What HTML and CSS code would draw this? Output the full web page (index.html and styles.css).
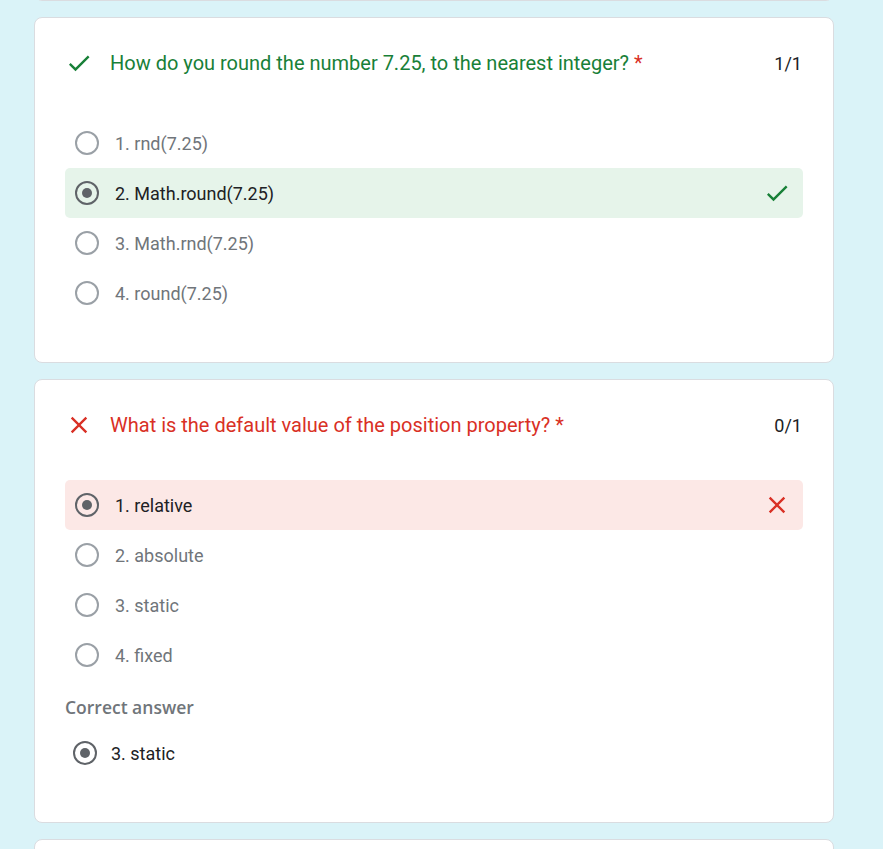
FILE: index.html
```html
<!DOCTYPE html>
<html lang="en">
<head>
<meta charset="utf-8">
<title>Quiz results</title>
<link rel="stylesheet" href="styles.css">
</head>
<body>
<main class="page">
  <section class="card card-prev"></section>

  <section class="card">
    <header class="q-head">
      <span class="q-icon">
        <svg width="28" height="28" viewBox="0 0 24 24"><path fill="#188038" d="M9 16.17L4.83 12l-1.42 1.41L9 19 21 7l-1.41-1.41z"/></svg>
      </span>
      <h2 class="q-title q-title-ok">How do you round the number 7.25, to the nearest integer? <span class="req">*</span></h2>
      <span class="q-score">1/1</span>
    </header>
    <ul class="opts">
      <li class="opt"><span class="radio"></span><span class="opt-text">1. rnd(7.25)</span></li>
      <li class="opt opt-ok"><span class="radio radio-on"></span><span class="opt-text">2. Math.round(7.25)</span>
        <svg class="opt-mark" width="28" height="28" viewBox="0 0 24 24"><path fill="#188038" d="M9 16.17L4.83 12l-1.42 1.41L9 19 21 7l-1.41-1.41z"/></svg>
      </li>
      <li class="opt"><span class="radio"></span><span class="opt-text">3. Math.rnd(7.25)</span></li>
      <li class="opt"><span class="radio"></span><span class="opt-text">4. round(7.25)</span></li>
    </ul>
  </section>

  <section class="card">
    <header class="q-head">
      <span class="q-icon">
        <svg width="28" height="28" viewBox="0 0 24 24"><path fill="#d93025" d="M19 6.41L17.59 5 12 10.59 6.41 5 5 6.41 10.59 12 5 17.59 6.41 19 12 13.41 17.59 19 19 17.59 13.41 12z"/></svg>
      </span>
      <h2 class="q-title q-title-bad">What is the default value of the position property? <span class="req">*</span></h2>
      <span class="q-score">0/1</span>
    </header>
    <ul class="opts">
      <li class="opt opt-bad"><span class="radio radio-on"></span><span class="opt-text">1. relative</span>
        <svg class="opt-mark" width="28" height="28" viewBox="0 0 24 24"><path fill="#d93025" d="M19 6.41L17.59 5 12 10.59 6.41 5 5 6.41 10.59 12 5 17.59 6.41 19 12 13.41 17.59 19 19 17.59 13.41 12z"/></svg>
      </li>
      <li class="opt"><span class="radio"></span><span class="opt-text">2. absolute</span></li>
      <li class="opt"><span class="radio"></span><span class="opt-text">3. static</span></li>
      <li class="opt"><span class="radio"></span><span class="opt-text">4. fixed</span></li>
    </ul>
    <div class="correct-label">Correct answer</div>
    <div class="opt opt-correct"><span class="radio radio-on"></span><span class="opt-text">3. static</span></div>
  </section>

  <section class="card card-next"></section>
</main>
</body>
</html>
```

FILE: styles.css
```css
* { box-sizing: border-box; }

html, body {
  margin: 0;
  padding: 0;
  background: #daf3f8;
  font-family: Roboto, "Liberation Sans", Arial, sans-serif;
  overflow: hidden;
}

.page {
  width: 800px;
  margin-left: 34px;
  margin-top: -39px;
  display: flex;
  flex-direction: column;
  gap: 16px;
}

.card {
  background: #fff;
  border: 1px solid #dadce0;
  border-radius: 8px;
  padding: 33px 30px 44px 30px;
}

.card-prev { height: 40px; padding: 0; }
.card-next { height: 60px; padding: 0; }

.q-head {
  display: flex;
  align-items: center;
  height: 24px;
  margin-bottom: 43px;
}

.q-icon {
  width: 45px;
  flex: none;
  display: flex;
  align-items: center;
}
.q-icon svg { display: block; }

.q-title {
  flex: 1;
  margin: 0;
  font-size: 20px;
  font-weight: 400;
  line-height: 24px;
}
.q-title-ok { color: #188038; }
.q-title-bad { color: #d93025; }
.req { color: #d93025; }

.q-score {
  font-size: 18px;
  color: #202124;
  padding-right: 1px;
}

.opts {
  list-style: none;
  margin: 0;
  padding: 0;
}

.opt {
  display: flex;
  align-items: center;
  height: 50px;
  padding-left: 10px;
  padding-right: 12px;
  gap: 16px;
  border-radius: 5px;
  font-size: 18px;
  color: #70757a;
}

.opt-ok { background: #e6f4ea; color: #202124; }
.opt-bad { background: #fce8e6; color: #202124; }

.opt-text { flex: 1; }
.opt-mark { display: block; flex: none; }

.radio {
  flex: none;
  width: 24px;
  height: 24px;
  border: 2px solid #9aa0a6;
  border-radius: 50%;
  display: flex;
  align-items: center;
  justify-content: center;
}
.radio-on { border-color: #5f6368; }
.radio-on::after {
  content: "";
  width: 10px;
  height: 10px;
  border-radius: 50%;
  background: #5f6368;
}

.correct-label {
  margin-top: 17px;
  font-family: "Open Sans", Roboto, sans-serif;
  font-size: 17.5px;
  line-height: 20px;
  font-weight: 600;
  color: #70757a;
}

.opt-correct {
  margin-top: 11px;
  padding-left: 8px;
  gap: 14px;
  color: #202124;
}
```
